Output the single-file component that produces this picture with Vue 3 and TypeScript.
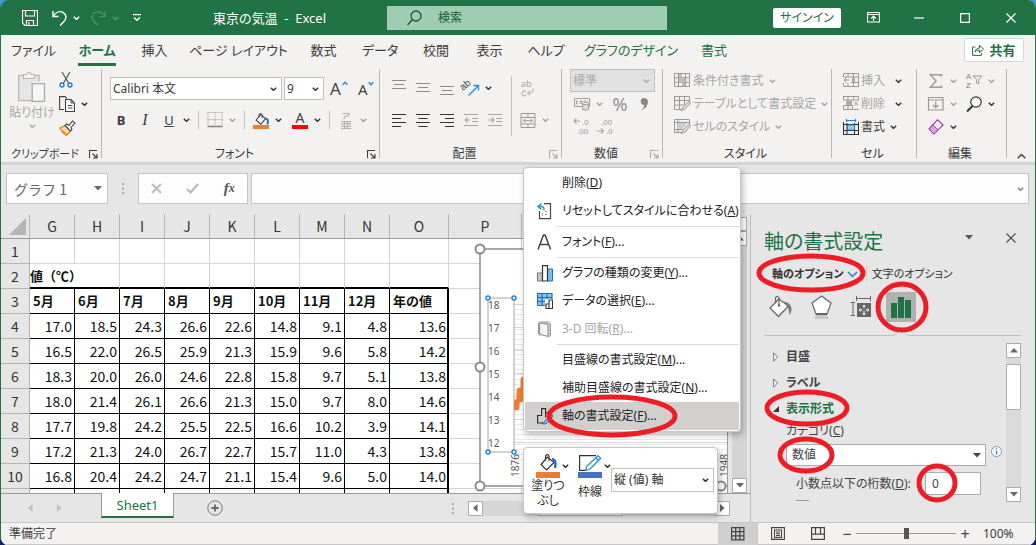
<script setup lang="ts">
import { h, ref } from 'vue'

const art: Record<string, string> = {
  chev: '<path d="M.8 .8 3.5 3.4 6.2 .8" fill="none" stroke="currentColor" stroke-width="1.5"/>',
  chevL: '<path d="M1 1 5.500 5.500 10 1" fill="none" stroke="currentColor" stroke-width="1.5"/>',
  down: '<path d="M0 0h8L4 4.500z" fill="currentColor"/>',
  up: '<path d="M0 4.500h8L4 0z" fill="currentColor"/>',
  left: '<path d="M4.500 0v8L0 4z" fill="currentColor"/>',
  right: '<path d="M0 0v8l4.500-4z" fill="currentColor"/>',
  save: '<path d="M.5 .5h15v15H3L.5 13zM3.500 .5v5.500h9V.5M4.500 15.500v-5h7v5M7 12v3" fill="none" stroke="#fff" stroke-width="1.200"/>',
  undo: '<path d="M1 1v5.500h5.500M1.500 6C4 2 8 1 11 2.500c4 2.200 3.500 6.500 1 9L8 15.500" fill="none" stroke="currentColor" stroke-width="1.400"/>',
  redo: '<path d="M14 1v5.500H8.500M13.500 6C11 2 7 1 4 2.500 0 4.700.5 9 3 11.500L7 15.500" fill="none" stroke="currentColor" stroke-width="1.200"/>',
  custom: '<path d="M0 .7h8" stroke="#fff" stroke-width="1.300"/><path d="M1 3.500 4 6.300 7 3.500" fill="none" stroke="#fff" stroke-width="1.400"/>',
  search: '<circle cx="9" cy="6" r="5" fill="none" stroke="currentColor" stroke-width="1.300"/><path d="M5.500 9.500.5 15" stroke="currentColor" stroke-width="1.400"/>',
  display: '<path d="M.5 .5h12v9.500H.5zM.5 2.500h12M6.500 9V4.500M4.200 6.500 6.500 4.200l2.300 2.300" fill="none" stroke="#fff" stroke-width="1.200"/>',
  min: '<path d="M0 5h10" stroke="#fff" stroke-width="1.200"/>',
  max: '<path d="M.6 .6h8.800v8.800H.6z" fill="none" stroke="#fff" stroke-width="1.200"/>',
  close: '<path d="M.5 .5l9 9m0-9l-9 9" stroke="currentColor" stroke-width="1.300"/>',
  share: '<path d="M3.500 3H.6v8.400h8.800V9M3 8c.5-3 2.500-4 4.500-4V1.200L11.500 5 7.500 8.500V6C5.500 6 4 6.500 3 8z" fill="none" stroke="#217346" stroke-width="1"/>',
  paste: '<path d="M6 3.500H.7v25h13M21 9.500v-6h-5" fill="none" stroke="#b9b9b9" stroke-width="1.500"/><path d="M2 5h18v5h-6v17H2z" fill="#e6e6e6"/><path d="M5.500 6.500v-4h3a2.600 2.600 0 0 1 5 0h3v4z" fill="#f3f2f1" stroke="#b9b9b9" stroke-width="1.200"/><path d="M14.200 11.700h12.300v17.600H14.200z" fill="#f6f6f6" stroke="#a9a9a9" stroke-width="1.300"/>',
  cut: '<path d="M3 0l6.500 11M11 0 4.500 11" stroke="#555" stroke-width="1.200"/><circle cx="3" cy="13" r="2" fill="none" stroke="#1e7fd0" stroke-width="1.400"/><circle cx="11" cy="13" r="2" fill="none" stroke="#1e7fd0" stroke-width="1.400"/>',
  copy: '<path d="M5 13.500H.6V.6H6l2 2" fill="none" stroke="#444" stroke-width="1.100"/><path d="M6.500 3.500h5.500l3.500 3.500v8.500h-9z" fill="#fff" stroke="#444" stroke-width="1.100"/><path d="M12 3.500V7h3.500M9 9.500h4.500M9 12h4.500" fill="none" stroke="#444"/>',
  brush: '<path d="M1 8l5-2.500 5.500 5.500-4 4.500C5 14 2.500 11.500 1 8z" fill="#ffd9ad" stroke="#e8821e" stroke-width="1.300"/><path d="M4 11l4 4" stroke="#e8821e"/><path d="M6 5.500 8 4l2 1.500L13.500 1 16 3l-4 4.500 1 2-1.500 1.500z" fill="#fff" stroke="#444" stroke-width="1.100"/>',
  launch: '<path d="M.5 8V.5H8M3.500 3.500l4 4M8 4v4H4" fill="none" stroke="currentColor" stroke-width="1.100"/>',
  borders: '<path d="M.5 0v14M7.500 0v14M14.500 0v14M0 .5h15M0 7.500h15" stroke="#a0a0a0" stroke-dasharray="1 1" fill="none"/><path d="M0 14.500h15" stroke="#808080" stroke-width="1.500"/>',
  bucket: '<path d="M6.500 1.500 2.200 7.200l4.600 4 4.800-5.700z" fill="#fff" stroke="#444" stroke-width="1.100"/><path d="M5 4.500V1.800C5 0 8 0 8 1.800V5" fill="none" stroke="#444"/><path d="M11.500 5.500c2.500.2 3 2.500 1.800 6" fill="none" stroke="#1e6fb8" stroke-width="2"/>',
  mbucket: '<path d="M7.500 3 1 10.500l5.500 5.500 7.500-7.500z" fill="#fff" stroke="#333" stroke-width="1.200"/><path d="M5.500 6.500V2.500C5.500 0 9 0 9 2.500V7" fill="none" stroke="#333" stroke-width="1.100"/><path d="M12 5c3.500.5 4 4 3 9" fill="none" stroke="#1e6fb8" stroke-width="2.400"/>',
  ruby: '<path d="M1.500 1.500h7q0 2-3 3M4.500 3q0 3-2 4" fill="none" stroke="#b1b1b1" stroke-width="1.100"/><path d="M0 9.500h10M3.500 9.500v7M6.500 9.500v7M1 11.500v3h8v-3zM0 16.500h10" fill="none" stroke="#b1b1b1" stroke-width="1.100"/>',
  a0: '<path d="M0 .5h14M2 4.500h10M0 8.500h14" stroke="#8d8d8d"/>',
  aL: '<path d="M0 1.500h14M0 5.500h9M0 9.500h14M0 13.500h9" stroke="#333" stroke-width="1.200"/>',
  aC: '<path d="M0 1.500h14M2.500 5.500h9M0 9.500h14M2.500 13.500h9" stroke="#333" stroke-width="1.200"/>',
  aR: '<path d="M0 1.500h14M5 5.500h9M0 9.500h14M5 13.500h9" stroke="#333" stroke-width="1.200"/>',
  outd: '<path d="M0 2.500h14M8 6.500h6M8 9.500h6M0 13.500h14M1 8h5.500M3.500 5.500 1 8l2.500 2.500" fill="none" stroke="#a8a8a8" stroke-width="1.100"/>',
  ind: '<path d="M0 2.500h14M8 6.500h6M8 9.500h6M0 13.500h14M0 8h6M3.500 5.500 6 8l-2.500 2.500" fill="none" stroke="#a8a8a8" stroke-width="1.100"/>',
  orient: '<text x="3" y="14" font-size="10" font-family="Liberation Sans" fill="#444" transform="rotate(-40 3 14)">ab</text><path d="M8.500 18.500 18 9M13.500 8.500H18.500V13.500" fill="none" stroke="#1e8fd8" stroke-width="1.300"/>',
  wrap: '<text x="2" y="9" font-size="9" font-family="Noto Sans" fill="#a6a6a6">ab</text><path d="M7 13.500q-4-1.500-4 2t4 2M14 10.500q1.500 5-5 4.500M11 12.500 8.500 15l2.500 2.500" fill="none" stroke="#a6a6a6"/>',
  merge: '<path d="M.5 .5h14v14H.5zM.5 4.500h14M.5 11h14M7.500 .5v4M7.500 11v4M3 7.700h9M5 5.700l-2 2 2 2M10 5.700l2 2-2 2" fill="none" stroke="#999"/>',
  money: '<path d="M.5 2.500h15v8H.5z" fill="none" stroke="#a0a0a0"/><path d="M4 5H2.500v3H4M6 8V5h2v3M10 5h2M13 5v2" fill="none" stroke="#a0a0a0"/><path d="M8.500 7.500v6q3 1.800 6 0v-6z" fill="#ddd" stroke="#a0a0a0"/><ellipse cx="11.500" cy="7.500" rx="3" ry="1.200" fill="#eee" stroke="#a0a0a0"/>',
  comma: '<path d="M4 0a3.500 3.500 0 1 0 .5 7Q4 10 1 12q7-2 7-8.500Q7.500 0 4 0z" fill="#888"/>',
  dec1: '<path d="M8 5H1.800M4.500 2.500 2 5l2.500 2.500" fill="none" stroke="#aaa" stroke-width="1.100"/><text x="10" y="9" font-size="8" font-family="Liberation Sans" fill="#999">.0</text><text x="5" y="18" font-size="8" font-family="Liberation Sans" fill="#999">.00</text>',
  dec2: '<path d="M1 15h6.500M5 12.500 7.500 15 5 17.500" fill="none" stroke="#aaa" stroke-width="1.100"/><text x="5" y="9" font-size="8" font-family="Liberation Sans" fill="#999">.00</text><text x="10" y="18" font-size="8" font-family="Liberation Sans" fill="#999">.0</text>',
  cond: '<path d="M.5 .5h15v13H.5zM.5 4.800h15M.5 9.200h15M4.500 .5v13M11.500 .5v13" fill="none" stroke="#999"/><path d="M5 1h3v3.500H5zM5 5h6v4H5zM8 9.500h3V13H8z" fill="#bbb"/>',
  tfmt: '<path d="M9 13.500H.5V.5h15V5M.5 4.500h15M.5 9h10M5.500 .5v13M10.500 .5v8" fill="none" stroke="#999"/><path d="M15.500 5 9.500 10.500 7 14.500l4-1.500L16.500 7z" fill="#ddd" stroke="#999"/>',
  cfmt: '<path d="M9 13.500H.5V.5h15V5M.5 3.500h15M.5 10.500h8M4 .5v13" fill="none" stroke="#999"/><path d="M4.500 4h9l-5 6h-4z" fill="#ccc"/><path d="M15.500 5 9.500 10.500 7 14.500l4-1.500L16.500 7z" fill="#ddd" stroke="#999"/>',
  cins: '<path d="M.5 4V.5h15v13H.5V10M5 .5V4M10.500 .5v13M5 10v3.500M.5 4h15M8 9.500h7.500M6.500 7H1M3.500 4.500 1 7l2.500 2.500" fill="none" stroke="#999"/><path d="M9 5h3v4H9z" fill="#aaa"/>',
  cdel: '<path d="M0 .5h15.500V4H.5V.5M5 .5V4M10.500 .5V4M.5 9.500h9v4h-9zM5 9.500v4M10 13.500h5.500M11 5.500l4 4m0-4l-4 4" fill="none" stroke="#999"/><path d="M3 4.500h6v4.500H3z" fill="#aaa"/>',
  cfm: '<path d="M.5 3v12.500h15V3M.5 5.500h15M.5 11.500h15M4 4v11.500M11.500 4v11.500" fill="none" stroke="#333" stroke-width="1.100"/><path d="M4.500 6h7v5h-7z" fill="#9ecbf0" stroke="#1e7fd0"/><path d="M3.500 1.500h9M3.500 0v3M12.500 0v3" stroke="#1e7fd0" stroke-width="1.200"/>',
  sigma: '<path d="M12 2.500V.8H.8L6.500 7 .8 13.200H12v-1.700" fill="none" stroke="#9c9c9c" stroke-width="1.400"/>',
  az: '<text x="1" y="8" font-size="8" font-family="Liberation Sans" fill="#888">A</text><text x="1" y="17" font-size="8" font-family="Liberation Sans" fill="#777">Z</text><path d="M8 5h9l-3.300 3.500V13l-2.200-1V8.500z" fill="none" stroke="#999"/>',
  filld: '<path d="M.5 .5h14.500v12.500H.5zM.5 3h14.500M7.700 4.500v6M5 8l2.700 2.700L10.500 8" fill="none" stroke="#999" stroke-width="1.200"/>',
  find: '<circle cx="10" cy="6" r="5.200" fill="#fff" stroke="#333" stroke-width="1.200"/><path d="M6.500 10 1 15.500" stroke="#333" stroke-width="2"/>',
  erase: '<path d="M9.500 .8 15 6 6 15 1 10z" fill="#fff" stroke="#a23bb0" stroke-width="1.200"/><path d="M5 6l5 5-4 4-5-5z" fill="#d9a0e0" stroke="#a23bb0"/>',
  caret: '<path d="M.7 5.300 4.500 1.500 8.300 5.300" fill="none" stroke="#444" stroke-width="1.500"/>',
  growc: '<path d="M.7 3.800 3 1.200 5.300 3.800" fill="none" stroke="#1e8fd8" stroke-width="1.400"/>',
  shrinkc: '<path d="M.7 1.200 3 3.800 5.300 1.200" fill="none" stroke="#1e8fd8" stroke-width="1.400"/>',
  dots: '<path d="M0 0h2v2H0zM0 4.500h2v2H0zM0 9h2v2H0z" fill="#a8a8a8"/>',
  cancel: '<path d="M1 1l9 9M10 1l-9 9" stroke="#bbb" stroke-width="1.800"/>',
  ok: '<path d="M1 6l3.500 3.500L12 1" fill="none" stroke="#bbb" stroke-width="2.200"/>',
  plus: '<circle cx="8" cy="8" r="7.200" fill="none" stroke="#777"/><path d="M4.500 8h7M8 4.500v7" stroke="#666" stroke-width="1.800"/>',
  reset: '<path d="M7 .6h6.500v15H2.500V8" fill="none" stroke="#444" stroke-width="1.200"/><path d="M6 10l-1.500 1.500L6 13M8 8.500h3M8 11.500h3" fill="none" stroke="#888" stroke-dasharray="2 1"/><path d="M4.500 .5 1 3.500l3.500 3M1 3.500h3.500q3 .5 2.500 4" fill="none" stroke="#1e8fd8" stroke-width="1.300"/>',
  bigA: '<path d="M1 15.500 6.500 1h1.600l5.500 14.500M3 10.500h8.500" fill="none" stroke="#444" stroke-width="1.500"/>',
  ctype: '<path d="M.5 8h5v8h-5z" fill="#c4c4c4" stroke="#777"/><path d="M10.500 4h5v12h-5z" fill="#7cbcf0" stroke="#1e6fb8"/><path d="M5.500 .6h5V16h-5z" fill="#fff" stroke="#333" stroke-width="1.200"/>',
  cdata: '<path d="M.5 .5h14.500v12H.5z" fill="#8cc4f4"/><path d="M.5 12.500V.5h14.500V6M.5 4.500h14.500M.5 8.500h9M5 .5v12M10 .5v6M.5 12.500H8" fill="none" stroke="#1e6fb8" stroke-width="1.200"/><path d="M8 6h8v9.500H8z" fill="#fff"/><path d="M9 11h3v4.500H9zM12 7h3.500v8.500H12z" fill="#fff" stroke="#333" stroke-width="1.100"/>',
  rot: '<path d="M3.500 1h8l2 1.500v12l-2 1.500M3.500 1 1.500 2v11l2 1.500" fill="#ccc" stroke="#999"/><path d="M2.500 2l8.500 1.500v12L2.500 13z" fill="#f4f4f4" stroke="#999" stroke-width="1.200"/>',
  afmt: '<path d="M7 15H.6V7.500h4V.6h4v9M8.600 4.500h4V7" fill="none" stroke="#333" stroke-width="1.200"/><path d="M15.500 6.500 9 11.500q-1.500 3-4.500 4 5 1.500 7-2L16 8z" fill="#7cbcf0" stroke="#1e6fb8"/>',
  pen: '<path d="M17 .6H.6v14.800H7" fill="none" stroke="#333" stroke-width="1.200"/><path d="M19 .8l2.700 2.500L11 14l-4.500 1.500L8 11zM17 3l2.500 2.500" fill="#fff" stroke="#1e8fd8" stroke-width="1.300"/>',
  pbucket: '<path d="M10 4 1 13l8.500 8.500L19.500 11z" fill="#fff" stroke="#666" stroke-width="1.300"/><path d="M6.500 8V3Q8 -.5 10 3v7" fill="none" stroke="#666" stroke-width="1.200"/><circle cx="10" cy="10.500" r="1.300" fill="#666"/><path d="M14 6.500q6 .5 8 5 1.500 4-1.500 8.500-.5-7-3-9.500z" fill="#777"/>',
  penta: '<path d="M5 19h11l2 5H3z" fill="#c9c9c9"/><path d="M10.500 1 20 8l-4 11H5L1 8z" fill="#fff" stroke="#666" stroke-width="1.200"/><path d="M5 19h11" stroke="#666" stroke-width="2"/>',
  sizep: '<path d="M6 2.500h15M6.500 0v5M20.500 0v5M3 6v14M.5 6.500H5M.5 19.500H5" stroke="#666"/><path d="M7 7h14v14H7z" fill="#666"/><path d="M14 9v3.500M14 15v4M9 14h3.500M15.500 14H19M12.500 10.500 14 9l1.500 1.500M12.500 17.500 14 19l1.500-1.500M10.500 12.500 9 14l1.500 1.500M17.500 12.500 19 14l-1.500 1.500" fill="none" stroke="#fff"/>',
  bars: '<path d="M0 6h6v15H0zM7 0h6v21H7zM14 3h6v18h-6z" fill="#217346"/>',
  closed: '<path d="M.7 .8v8.400L4.500 5z" fill="#fff" stroke="#777" stroke-width="1"/>',
  open: '<path d="M6 0v6H0z" fill="#333"/>',
  info: '<circle cx="5.500" cy="5.500" r="5" fill="#fff" stroke="#6f9bd8"/><path d="M5.500 5v3.500M5.500 2.500v1.300" stroke="#3b6fc0" stroke-width="1.300"/>',
  vgrid: '<path d="M.6 .6h12.300v12.300H.6zM.6 4.700h12.300M.6 8.800h12.300M4.700 .6v12.300M8.800 .6v12.300" fill="none" stroke="#444" stroke-width="1.200"/>',
  vpage: '<path d="M.6 .6h12.800v11.800H.6zM3.500 3h7v7.500h-7zM5 5h4M5 6.800h4M5 8.600h4" fill="none" stroke="#444" stroke-width="1.100"/>',
  vbreak: '<path d="M.6 .6h12.800v11.800H.6zM4.500 .6v6.500M9.500 .6v6.500M.6 7.100h12.800" fill="none" stroke="#444" stroke-width="1.200"/>',
}

const Ico = (p: { n: string; w: number; t: number }) =>
  h('svg', { width: p.w, height: p.t, viewBox: `0 0 ${p.w} ${p.t}`, 'aria-hidden': 'true', innerHTML: art[p.n] })
Ico.props = ['n', 'w', 't']

const tabs = ['ファイル', 'ホーム', '挿入', 'ページ レイアウト', '数式', 'データ', '校閲', '表示', 'ヘルプ', 'グラフのデザイン', '書式']
const cols = ['G', 'H', 'I', 'J', 'K', 'L', 'M', 'N', 'O', 'P', 'Q', 'R']
const months = ['5月', '6月', '7月', '8月', '9月', '10月', '11月', '12月', '年の値']
const temps = [
  ['17.0', '18.5', '24.3', '26.6', '22.6', '14.8', '9.1', '4.8', '13.6'],
  ['16.5', '22.0', '26.5', '25.9', '21.3', '15.9', '9.6', '5.8', '14.2'],
  ['18.3', '20.0', '26.0', '24.6', '22.8', '15.8', '9.7', '5.1', '13.8'],
  ['18.0', '21.4', '26.1', '26.6', '21.3', '15.0', '9.7', '8.0', '14.6'],
  ['17.7', '19.8', '24.2', '25.5', '22.5', '16.6', '10.2', '3.9', '14.1'],
  ['17.2', '21.3', '24.0', '26.7', '22.7', '15.7', '11.0', '4.3', '13.8'],
  ['16.8', '20.4', '24.2', '24.7', '21.1', '15.4', '9.6', '5.0', '14.0'],
  ['', '', '', '', '', '', '', '', ''],
]
const styleRows = [
  { n: 'cond', t: '条件付き書式' },
  { n: 'tfmt', t: 'テーブルとして書式設定' },
  { n: 'cfmt', t: 'セルのスタイル' },
]
const cellRows = [
  { n: 'cins', t: '挿入', off: true },
  { n: 'cdel', t: '削除', off: true },
  { n: 'cfm', t: '書式', off: false },
]
interface MenuRow { t?: string; k?: string; e?: string; n?: string; off?: boolean; hot?: boolean }
const menu: MenuRow[] = [
  { t: '削除', k: 'D', e: '' },
  { t: 'リセットしてスタイルに合わせる', k: 'A', e: '', n: 'reset' },
  {},
  { t: 'フォント', k: 'F', e: '...', n: 'bigA' },
  {},
  { t: 'グラフの種類の変更', k: 'Y', e: '...', n: 'ctype' },
  { t: 'データの選択', k: 'E', e: '...', n: 'cdata' },
  { t: '3-D 回転', k: 'R', e: '...', n: 'rot', off: true },
  {},
  { t: '目盛線の書式設定', k: 'M', e: '...' },
  { t: '補助目盛線の書式設定', k: 'N', e: '...' },
  { t: '軸の書式設定', k: 'F', e: '...', n: 'afmt', hot: true },
]
const axis = [18, 17, 16, 15, 14, 13, 12]
const minor = Array.from({ length: 32 }, (_, i) => 61 + i * 5)
const digits = ref('0')
const zoom = ref(50)
</script>

<template>
  <div class="win">
    <header class="title">
      <div class="quick">
        <button aria-label="保存"><Ico n="save" :w="16" :t="16" /></button>
        <button class="hist" aria-label="元に戻す"><Ico n="undo" :w="15" :t="16" /><Ico n="chev" :w="7" :t="4" /></button>
        <button class="hist dim" aria-label="やり直し"><Ico n="redo" :w="15" :t="16" /><Ico n="chev" :w="7" :t="4" /></button>
        <button aria-label="カスタマイズ"><Ico n="custom" :w="8" :t="7" /></button>
      </div>
      <span class="doc">東京の気温&nbsp; -&nbsp; Excel</span>
      <label class="search"><Ico n="search" :w="15" :t="16" /><input type="text" placeholder="検索" aria-label="検索" /></label>
      <div class="sys">
        <button class="signin">サインイン</button>
        <button aria-label="リボンの表示"><Ico n="display" :w="13" :t="11" /></button>
        <button aria-label="最小化"><Ico n="min" :w="10" :t="10" /></button>
        <button aria-label="最大化"><Ico n="max" :w="10" :t="10" /></button>
        <button aria-label="閉じる"><Ico n="close" :w="10" :t="10" /></button>
      </div>
    </header>

    <nav class="tabs">
      <div class="tablist">
        <button v-for="(t, i) in tabs" :key="t" :class="{ on: i === 1, ctx: i > 8 }"><span>{{ t }}</span></button>
      </div>
      <button class="share"><Ico n="share" :w="12" :t="12" />共有</button>
    </nav>

    <section class="ribbon">
      <div class="grp g-clip">
        <div class="body">
          <button class="paste"><Ico n="paste" :w="28" :t="30" /><span>貼り付け</span><Ico n="chev" :w="7" :t="4" /></button>
          <div class="clipcol">
            <button aria-label="切り取り"><Ico n="cut" :w="14" :t="16" /></button>
            <button aria-label="コピー"><Ico n="copy" :w="16" :t="16" /><Ico n="chev" :w="7" :t="4" /></button>
            <button aria-label="書式のコピー"><Ico n="brush" :w="17" :t="16" /></button>
          </div>
        </div>
        <div class="lab"><span>クリップボード</span><Ico n="launch" :w="9" :t="9" /></div>
      </div>

      <div class="grp g-font">
        <div class="body low">
          <div class="row fontrow">
            <span class="sel fname"><select aria-label="フォント名"><option>Calibri 本文</option></select><Ico n="chev" :w="7" :t="4" /></span>
            <span class="sel fsize"><select aria-label="フォント サイズ"><option>9</option></select><Ico n="chev" :w="7" :t="4" /></span>
            <button class="grow" aria-label="拡大">A<Ico n="growc" :w="6" :t="5" /></button>
            <button class="shrink" aria-label="縮小">A<Ico n="shrinkc" :w="6" :t="5" /></button>
          </div>
          <div class="row">
            <button class="b"><b>B</b></button>
            <button class="b"><i>I</i></button>
            <button class="split"><u>U</u><Ico n="chev" :w="7" :t="4" /></button>
            <i class="bar"></i>
            <button class="split off" aria-label="罫線"><Ico n="borders" :w="15" :t="16" /><Ico n="chev" :w="7" :t="4" /></button>
            <i class="bar"></i>
            <button class="split" aria-label="塗りつぶしの色"><span class="ink orange"><Ico n="bucket" :w="15" :t="12" /></span><Ico n="chev" :w="7" :t="4" /></button>
            <button class="split fc" aria-label="フォントの色"><span class="ink red">A</span><Ico n="chev" :w="7" :t="4" /></button>
            <i class="bar"></i>
            <button class="split off" aria-label="ふりがな"><Ico n="ruby" :w="10" :t="17" /><Ico n="chev" :w="7" :t="4" /></button>
          </div>
        </div>
        <div class="lab"><span>フォント</span><Ico n="launch" :w="9" :t="9" /></div>
      </div>

      <div class="grp g-align">
        <div class="body low horiz">
          <div>
            <div class="row">
              <button class="b st" aria-label="上揃え"><Ico n="a0" :w="14" :t="10" /></button>
              <button class="b" aria-label="上下中央"><Ico n="a0" :w="14" :t="10" /></button>
              <button class="b sb" aria-label="下揃え"><Ico n="a0" :w="14" :t="10" /></button>
              <button class="split" aria-label="方向"><Ico n="orient" :w="22" :t="22" /><Ico n="chev" :w="7" :t="4" /></button>
            </div>
            <div class="row">
              <button class="b" aria-label="左揃え"><Ico n="aL" :w="14" :t="15" /></button>
              <button class="b" aria-label="中央揃え"><Ico n="aC" :w="14" :t="15" /></button>
              <button class="b" aria-label="右揃え"><Ico n="aR" :w="14" :t="15" /></button>
              <button class="b" aria-label="インデントを減らす"><Ico n="outd" :w="14" :t="16" /></button>
              <button class="b" aria-label="インデントを増やす"><Ico n="ind" :w="14" :t="16" /></button>
            </div>
          </div>
          <i class="bar tall"></i>
          <div>
            <div class="row"><button class="b" aria-label="折り返し"><Ico n="wrap" :w="18" :t="20" /></button></div>
            <div class="row"><button class="split off" aria-label="結合"><Ico n="merge" :w="15" :t="15" /><Ico n="chev" :w="7" :t="4" /></button></div>
          </div>
        </div>
        <div class="lab dis"><span>配置</span><Ico n="launch" :w="9" :t="9" /></div>
      </div>

      <div class="grp g-num">
        <div class="body">
          <span class="sel nfmt"><select disabled aria-label="表示形式"><option>標準</option></select><Ico n="chev" :w="7" :t="4" /></span>
          <div class="row nrow">
            <button class="split off" aria-label="通貨"><Ico n="money" :w="16" :t="15" /><Ico n="chev" :w="7" :t="4" /></button>
            <button class="pct">%</button>
            <button class="b" aria-label="桁区切り"><Ico n="comma" :w="8" :t="12" /></button>
          </div>
          <div class="row nrow">
            <button class="b" aria-label="小数点以下を増やす"><Ico n="dec1" :w="20" :t="21" /></button>
            <button class="b" aria-label="小数点以下を減らす"><Ico n="dec2" :w="20" :t="21" /></button>
          </div>
        </div>
        <div class="lab dis"><span>数値</span><Ico n="launch" :w="9" :t="9" /></div>
      </div>

      <div class="grp g-style">
        <div class="body">
          <button v-for="s in styleRows" :key="s.t" class="cmd off"><Ico :n="s.n" :w="17" :t="15" /><span>{{ s.t }}</span><Ico n="chev" :w="7" :t="4" /></button>
        </div>
        <div class="lab"><span>スタイル</span></div>
      </div>

      <div class="grp g-cell">
        <div class="body">
          <button v-for="s in cellRows" :key="s.t" class="cmd" :class="{ grey: s.off }"><Ico :n="s.n" :w="16" :t="16" /><span>{{ s.t }}</span><Ico n="chev" :w="7" :t="4" class="ch" /></button>
        </div>
        <div class="lab"><span>セル</span></div>
      </div>

      <div class="grp g-edit">
        <div class="body">
          <div class="row nrow"><button class="split off" aria-label="合計"><Ico n="sigma" :w="13" :t="14" /><Ico n="chev" :w="7" :t="4" /></button><button class="split off" aria-label="並べ替え"><Ico n="az" :w="18" :t="19" /><Ico n="chev" :w="7" :t="4" /></button></div>
          <div class="row nrow"><button class="split off" aria-label="フィル"><Ico n="filld" :w="16" :t="14" /><Ico n="chev" :w="7" :t="4" /></button><button class="split" aria-label="検索と選択"><Ico n="find" :w="16" :t="16" /><Ico n="chev" :w="7" :t="4" /></button></div>
          <div class="row nrow"><button class="split" aria-label="クリア"><Ico n="erase" :w="16" :t="16" /><Ico n="chev" :w="7" :t="4" /></button></div>
        </div>
        <div class="lab"><span>編集</span></div>
      </div>
      <button class="fold" aria-label="リボンを折りたたむ"><Ico n="caret" :w="9" :t="6" /></button>
    </section>

    <section class="formula">
      <span class="namebox"><input type="text" value="グラフ 1" aria-label="名前ボックス" /><Ico n="down" :w="8" :t="5" /></span>
      <Ico n="dots" :w="2" :t="11" />
      <div class="fxbox">
        <button aria-label="キャンセル"><Ico n="cancel" :w="11" :t="11" /></button>
        <button aria-label="入力"><Ico n="ok" :w="13" :t="11" /></button>
        <button class="fx" aria-label="関数の挿入">f<small>x</small></button>
      </div>
      <span class="fbar"><input type="text" aria-label="数式バー" /><Ico n="chev" :w="7" :t="4" /></span>
    </section>

    <main class="work">
      <div class="book">
        <div class="view">
          <div class="sheet">
            <table>
              <colgroup><col class="c0" /><col v-for="i in 8" :key="i" class="c1" /><col class="c2" /><col v-for="i in 3" :key="'p' + i" class="c3" /></colgroup>
              <thead>
                <tr><th class="corner"><i></i></th><th v-for="c in cols" :key="c">{{ c }}</th></tr>
              </thead>
              <tbody>
                <tr><th>1</th><td v-for="c in cols" :key="c"></td></tr>
                <tr class="cap"><th>2</th><td colspan="2">値（℃）</td><td v-for="i in 10" :key="i"></td></tr>
                <tr class="rec head"><th>3</th><td v-for="m in months" :key="m">{{ m }}</td><td></td><td></td><td></td></tr>
                <tr v-for="(r, i) in temps" :key="i" class="rec"><th>{{ i < 7 ? i + 4 : '' }}</th><td v-for="(v, j) in r" :key="j">{{ v }}</td><td></td><td></td><td></td></tr>
              </tbody>
            </table>
            <svg class="chart" width="256" height="252" viewBox="0 0 256 252" role="img" aria-label="気温グラフ">
              <path d="M6 6h250v238H6z" fill="#fff" />
              <path v-for="y in minor" :key="y" :d="`M40 ${y}.5h216`" stroke="#e9e9e9" />
              <path v-for="(a, i) in axis" :key="a" :d="`M40 ${61 + i * 23}.5h216`" stroke="#d4d4d4" />
              <path d="M6 248V6h250M6 243h250" fill="none" stroke="#8c8c8c" stroke-width="1.500" />
              <path d="M42 160v4M46 148v8M50 137v8" fill="none" stroke="#ed7d31" stroke-width="7" stroke-linecap="round" />
              <path d="M42 162l4-10 4 2v-14" fill="none" stroke="#ed7d31" stroke-width="3" />
              <path d="M14 55h26v154H14z" fill="#fff" stroke="#a6a6a6" />
              <text v-for="(a, i) in axis" :key="a" x="14" :y="66 + i * 23" class="ax">{{ a }}</text>
              <text class="ax" transform="translate(45 234) rotate(-90)">1876</text>
              <text class="ax" transform="translate(254 234) rotate(-90)">1948</text>
              <g fill="#fff" stroke="#8c8c8c" stroke-width="2"><circle cx="6" cy="6" r="4.500" /><circle cx="6" cy="124" r="4.500" /><circle cx="6" cy="243" r="4.500" /><circle cx="247" cy="243" r="4.500" /></g>
              <g fill="#fff" stroke="#1e88d8" stroke-width="1.500"><circle cx="14" cy="55" r="2" /><circle cx="40" cy="55" r="2" /><circle cx="14" cy="209" r="2" /><circle cx="40" cy="209" r="2" /></g>
            </svg>
          </div>
          <div class="vscroll"><button class="sbtn split2" aria-label="分割"></button><button class="sbtn" aria-label="上へ"><Ico n="up" :w="8" :t="5" /></button><i></i><button class="sbtn" aria-label="下へ"><Ico n="down" :w="8" :t="5" /></button></div>
        </div>
        <div class="sheets">
          <div class="navs"><Ico n="left" :w="5" :t="8" /><Ico n="right" :w="5" :t="8" /></div>
          <button class="stab">Sheet1</button>
          <button class="add" aria-label="新しいシート"><Ico n="plus" :w="16" :t="16" /></button>
          <Ico n="dots" :w="2" :t="11" class="grip" />
          <div class="hscroll"><button class="sbtn" aria-label="左へ"><Ico n="left" :w="5" :t="8" /></button><i><b></b></i><button class="sbtn" aria-label="右へ"><Ico n="right" :w="5" :t="8" /></button></div>
        </div>
      </div>

      <aside class="pane">
        <div class="phead"><h2>軸の書式設定</h2><Ico n="down" :w="9" :t="5" /><button aria-label="閉じる"><Ico n="close" :w="10" :t="10" /></button></div>
        <div class="popt"><button><b>軸のオプション</b><Ico n="chevL" :w="11" :t="7" class="blue" /></button><i></i><button>文字のオプション</button></div>
        <div class="picons">
          <button aria-label="塗りつぶしと線"><Ico n="pbucket" :w="24" :t="24" /></button>
          <button aria-label="効果"><Ico n="penta" :w="21" :t="25" /></button>
          <button aria-label="サイズとプロパティ"><Ico n="sizep" :w="22" :t="22" /></button>
          <button class="on" aria-label="軸のオプション"><Ico n="bars" :w="20" :t="21" /></button>
        </div>
        <div class="pline"><svg width="258" height="7" viewBox="0 0 258 7"><path d="M0 6.500h130l7-6 7 6h114" fill="none" stroke="#c0c0c0" /></svg></div>
        <div class="pbody">
          <div class="pform">
            <button class="sec"><Ico n="closed" :w="6" :t="10" />目盛</button>
            <button class="sec"><Ico n="closed" :w="6" :t="10" />ラベル</button>
            <button class="sec on"><Ico n="open" :w="6" :t="6" />表示形式</button>
            <label class="cat" for="cat">カテゴリ(<u>C</u>)</label>
            <div class="catrow"><span class="sel"><select id="cat"><option>数値</option></select><Ico n="down" :w="8" :t="5" /></span><Ico n="info" :w="11" :t="11" /></div>
            <div class="digits"><label for="dig">小数点以下の桁数(<u>D</u>):</label><input id="dig" v-model="digits" type="text" /></div>
            <i class="cutbox"></i>
          </div>
          <div class="pscroll"><button class="sbtn" aria-label="上へ"><Ico n="up" :w="8" :t="5" /></button><i><b></b></i><button class="sbtn" aria-label="下へ"><Ico n="down" :w="8" :t="5" /></button></div>
        </div>
      </aside>
    </main>

    <footer class="status">
      <span>準備完了</span>
      <div class="views">
        <button class="on" aria-label="標準"><Ico n="vgrid" :w="14" :t="14" /></button>
        <button aria-label="ページ レイアウト"><Ico n="vpage" :w="14" :t="13" /></button>
        <button aria-label="改ページ プレビュー"><Ico n="vbreak" :w="14" :t="13" /></button>
      </div>
      <button class="pm">−</button>
      <input v-model="zoom" type="range" min="0" max="100" aria-label="ズーム" />
      <button class="pm">+</button>
      <span class="pc">100%</span>
    </footer>

    <div class="menu" role="menu">
      <template v-for="(m, i) in menu" :key="i">
        <button v-if="m.t" role="menuitem" :class="{ off: m.off, hot: m.hot }"><span class="mi"><Ico v-if="m.n" :n="m.n" :w="16" :t="17" /></span><span>{{ m.t }}(<u>{{ m.k }}</u>){{ m.e }}</span></button>
        <hr v-else />
      </template>
    </div>

    <div class="mini">
      <button><span class="mt"><span class="big orange"><Ico n="mbucket" :w="17" :t="17" /></span><Ico n="chev" :w="7" :t="4" /></span><span class="two">塗りつ<br />ぶし</span></button>
      <button><span class="mt"><span class="big blueb"><Ico n="pen" :w="22" :t="16" /></span><Ico n="chev" :w="7" :t="4" /></span><span class="one">枠線</span></button>
      <span class="sel"><select aria-label="グラフ要素"><option>縦 (値) 軸</option></select><Ico n="chev" :w="7" :t="4" /></span>
    </div>

    <svg class="marks" aria-hidden="true">
      <g fill="none" stroke="#ee1c25" stroke-width="5">
        <ellipse cx="811" cy="273" rx="52" ry="17" /><ellipse cx="902" cy="307" rx="24" ry="23" />
        <ellipse cx="807" cy="408" rx="40" ry="16" /><ellipse cx="806" cy="455" rx="26" ry="16" />
        <ellipse cx="937" cy="483" rx="18" ry="17" /><ellipse cx="612" cy="416" rx="63" ry="19" />
      </g>
    </svg>
  </div>
</template>

<style>
body { margin: 0; background: linear-gradient(#3b9ae8 50%, #0d1f6b 50%); }
</style>

<style scoped>
* { box-sizing: border-box; }
.win { position: relative; display: flex; flex-direction: column; height: 100vh; min-height: 520px; overflow: hidden; border: solid #217346; border-width: 0 1px; border-radius: 8px; background: #f3f2f1; color: #3b3b3b; font: 12px/16px "Noto Sans", "Noto Sans CJK JP", sans-serif; font-feature-settings: "palt"; }
button, input, select { margin: 0; padding: 0; border: 0; border-radius: 0; background: none; color: inherit; font: inherit; font-feature-settings: inherit; white-space: nowrap; }
button { display: flex; align-items: center; justify-content: center; }
svg { flex: none; display: block; }
input:focus, select:focus { outline: 0; }
i { font-style: normal; }
.sel { display: grid; align-items: center; background: #fff; border: 1px solid #c0c0c0; }
.sel > * { grid-area: 1 / 1; }
.sel > svg { justify-self: end; margin-right: 4px; pointer-events: none; }
.sel select { appearance: none; width: 100%; height: 100%; padding: 0 16px 0 2px; opacity: 1; }

.title { display: grid; grid-template-columns: 212px 174px 280px 1fr; align-items: center; height: 35px; background: #217346; color: #fff; }
.quick { display: flex; align-items: center; padding-left: 21px; gap: 14px; }
.hist { gap: 6px; width: 28px; }
.dim { margin-left: -3px; color: #4f9470; }
.doc { font-size: 13px; white-space: nowrap; }
.search { display: flex; align-items: center; gap: 16px; height: 24px; padding-left: 20px; background: #9fcdb3; color: #175c36; }
.search input { width: 180px; }
.search input::placeholder { color: #175c36; opacity: 1; }
.sys { display: flex; justify-content: flex-end; align-items: center; padding-right: 1px; }
.sys button { width: 46px; height: 34px; }
.sys .signin { width: 68px; height: 20px; margin-right: 9px; background: #fff; color: #217346; border-radius: 2px; }

.tabs { display: flex; justify-content: space-between; height: 31px; font-size: 13px; }
.tablist { display: grid; grid-template-columns: 65px 62px 53px 115px 55px 58px 54px 53px 60px 110px 56px; }
.tabs span { padding: 4px 0 3px; line-height: 20px; border-bottom: 3px solid transparent; }
.tabs .on span { font-weight: 700; color: #217346; border-color: #217346; }
.tabs .ctx { color: #217346; }
.tabs .share { width: 60px; height: 24px; margin: 3px 11px 0 0; gap: 5px; background: #fff; border: 1px solid #d8d8d8; border-radius: 2px; color: #217346; font-weight: 700; }

.ribbon { display: flex; height: 99px; border-bottom: 3px solid #d4d4d4; }
.grp { display: flex; flex-direction: column; flex: none; background: linear-gradient(#b8b8b8, #b8b8b8) right 0 top 3px / 1px 89px no-repeat; }
.g-clip { width: 101px; } .g-font { width: 278px; } .g-align { width: 182px; } .g-num { width: 101px; } .g-style { width: 169px; } .g-cell { width: 85px; } .g-edit { width: 90px; }
.body { height: 80px; padding-top: 3px; }
.low { padding: 11px 0 0 7px; }
.horiz { display: flex; padding-top: 10px; }
.low .row + .row { margin-top: 8px; }
.row { display: flex; align-items: center; height: 24px; }
.lab { display: flex; align-items: center; height: 16px; padding-right: 4px; white-space: nowrap; }
.lab span { flex: 1; text-align: center; }
.lab.dis svg { color: #aaa; }
.g-clip .lab span { font-size: 11px; }
.g-clip .body { display: flex; padding: 6px 0 0 6px; }
.paste { flex-direction: column; justify-content: flex-start; width: 50px; color: #a9a9a9; font-size: 12px; }
.paste span { line-height: 22px; }
.clipcol { display: grid; align-content: start; justify-items: start; gap: 8px; padding-left: 2px; }
.clipcol button { gap: 6px; }
.fontrow { height: 23px; }
.fname { width: 172px; height: 23px; margin: 0 2px 0 1px; }
.fsize { width: 40px; height: 23px; }
.fontrow button { height: 23px; gap: 1px; color: #444; }
.fontrow button svg { align-self: flex-start; margin-top: 4px; }
.grow { margin: 0 10px 0 6px; font-size: 17px; } .shrink { font-size: 15px; }
.b { width: 24px; height: 24px; font-size: 13px; }
.b i { font-style: italic; font-family: "Liberation Serif", serif; font-size: 16px; }
.split { width: 36px; height: 24px; justify-content: flex-start; font-size: 13px; }
.split > :first-child { width: 24px; text-align: center; }
.split > svg:last-child { margin-left: 2px; }
.off { color: #a6a6a6; }
.fc { margin-left: 3px; }
.bar { width: 1px; height: 20px; margin: 0 4px 0 5px; background: #c4c4c4; }
.tall { height: 60px; margin: 0 4px; }
.split > .ink { display: flex; justify-content: center; align-items: flex-end; width: 16px; height: 18px; margin: 0 4px; border-bottom: 4px solid; color: #444; font-size: 14px; line-height: 15px; }
.split > .orange, .mt > .orange { border-color: #ed7d31; } .split > .red { border-color: #f00; }
.st { padding-bottom: 6px; } .sb { padding-top: 6px; }
.g-num .body { padding-left: 8px; }
.nfmt { width: 85px; height: 23px; background: #e1e1e1; color: #ababab; }
.nfmt select { opacity: 1; color: #ababab; }
.nrow { height: 23px; }
.g-num .split { margin-right: 2px; }
.pct { width: 24px; color: #8f8f8f; font-size: 18px; }
.cmd { height: 23px; gap: 2px; font-size: 12px; }
.cmd > svg:last-child { margin-left: 3px; }
.g-style .body { padding-left: 11px; }
.g-cell .body { padding-left: 11px; }
.grey span { color: #a6a6a6; }
.cmd.grey > .ch { margin-left: 8px; }
.g-edit .body { padding-left: 7px; }
.g-edit .split + .split { margin-left: 2px; }
.fold { margin: 85px 0 0 10px; height: 10px; }

.formula { display: flex; align-items: center; height: 49px; padding: 0 6px 2px 5px; background: #e6e6e6; font-family: "Noto Sans CJK JP", sans-serif; }
.namebox, .fxbox, .fbar { display: flex; align-items: center; height: 31px; background: #fdfdfd; border: 1px solid #c4c4c4; }
.namebox { width: 102px; padding: 0 5px 0 7px; margin-right: 14px; color: #666; }
.namebox input { flex: 1; min-width: 0; font-size: 14px; font-feature-settings: normal; }
.fxbox { width: 110px; margin: 0 3px 0 14px; justify-content: space-around; }
.fx { font: italic 700 15px "Liberation Serif", serif; color: #555; } .fx small { font-size: 12px; }
.fbar { flex: 1; padding-right: 4px; color: #888; } .fbar input { flex: 1; }

.work { display: flex; flex: 1; min-height: 0; background: #e6e6e6; }
.book { display: flex; flex-direction: column; flex: 1; min-width: 0; }
.view { display: flex; flex: 1; min-height: 0; border-bottom: 1px solid #9b9b9b; }
.sheet { position: relative; flex: 1; min-width: 0; overflow: hidden; background: #fff; border-right: 1px solid #9b9b9b; }
table { table-layout: fixed; width: 666px; border-spacing: 0; font: 14px/20px "Noto Sans CJK JP", sans-serif; color: #111; font-feature-settings: normal; }
.c0 { width: 29px; } .c1 { width: 45px; } .c2 { width: 59px; } .c3 { width: 73px; }
th, td { height: 25px; padding: 0; border: solid #d4d4d4; border-width: 0 1px 1px 0; overflow: hidden; white-space: nowrap; }
th { background: #e6e6e6; color: #333; font-weight: 400; border-color: #b4b4b4; text-align: center; }
thead th { border-bottom-color: #999; }
.corner { padding: 0 3px 3px 0; }
.corner i { display: block; width: 17px; height: 17px; margin: 4px 0 0 auto; background: #b4b4b4; clip-path: polygon(100% 0, 100% 100%, 0 100%); }
.cap td:nth-child(2) { font-size: 13px; font-weight: 700; }
.cap td:nth-child(-n+9) { border-bottom: 2px solid #000; }
.rec td { text-align: right; padding-right: 2px; }
.rec td:nth-child(-n+10) { border-color: #000; }
.rec td:nth-child(10) { border-right-width: 2px; padding-right: 1px; }
.head td { text-align: left; padding: 0 0 0 3px; font-size: 13px; font-weight: 700; }
.chart { position: absolute; left: 473px; top: 29px; }
.ax { font: 10px "Noto Sans", sans-serif; fill: #595959; }
.vscroll { display: flex; flex-direction: column; width: 15px; margin: 3px 3px 0 4px; }
.vscroll > i { flex: 1; background: #d4d4d4; }
.sbtn { flex: none; width: 15px; height: 15px; background: #fff; border: 1px solid #ababab; color: #666; }
.split2 { height: 14px; }

.sheets { display: flex; align-items: center; height: 28px; padding-right: 20px; }
.navs { display: flex; gap: 24px; width: 100px; padding-left: 27px; color: #c0c0c0; }
.stab { align-self: flex-start; width: 73px; height: 25px; margin-top: -1px; background: #fff; border: 1px solid #9b9b9b; border-width: 0 1px 2px; border-bottom-color: #217346; color: #217346; font-size: 13px; }
.add { margin: 0 auto 0 33px; }
.grip { margin-right: 14px; }
.hscroll { display: flex; width: 262px; }
.hscroll i { flex: 1; padding-left: 56px; background: #d6d6d6; } .hscroll b { display: block; width: 83px; height: 15px; background: #fff; border: 1px solid #ababab; }

.pane { display: flex; flex-direction: column; flex: 0 0 285px; min-width: 0; padding: 14px 14px 20px 13px; border-left: 1px solid #bdbdbd; color: #444; }
.phead { display: flex; align-items: center; height: 27px; color: #555; }
.phead h2 { flex: 1; margin: 0; font-size: 20px; line-height: 27px; font-weight: 400; color: #217346; }
.phead button { margin: 0 5px 8px 32px; } .phead > svg { margin-bottom: 8px; }
.popt { display: flex; align-items: center; height: 20px; margin: 9px 0 0 8px; font-size: 11px; }
.popt button { gap: 3px; color: #333; } .popt > i { width: 1px; height: 16px; margin: 0 5px 0 8px; background: #d0d0d0; }
.blue { color: #1e88d8; }
.picons { display: flex; gap: 10px; margin-top: 8px; padding-left: 2px; }
.picons button { width: 30px; height: 30px; } .picons .on { background: #b1b1b1; }
.pline { height: 7px; overflow: hidden; margin-top: 7px; }
.pbody { display: flex; flex: 1; min-height: 0; padding-top: 7px; }
.pform { flex: 1; min-width: 0; overflow: hidden; padding-top: 1px; }
.sec { gap: 7px; height: 26px; margin-left: 9px; font-weight: 700; } .sec.on { color: #217346; }
.cat { display: block; margin: 0 0 4px 22px; line-height: 18px; height: 18px; }
.catrow { display: flex; gap: 5px; margin-left: 22px; }
.catrow .sel { width: 200px; height: 22px; border-color: #ababab; } .catrow select { padding-left: 5px; }
.catrow > svg { margin-top: 2px; }
.digits { display: flex; align-items: center; margin: 6px 0 0 32px; }
.digits label { flex: 0 0 129px; white-space: nowrap; }
.digits input { width: 56px; height: 23px; padding-left: 6px; background: #fff; border: 1px solid #ababab; }
.cutbox { display: block; width: 13px; height: 1px; margin: 5px 0 0 32px; background: #999; }
.pscroll { display: flex; flex-direction: column; width: 15px; }
.pscroll > i { flex: 1; padding-top: 6px; background: #dadada; } .pscroll b { display: block; height: 46px; background: #fff; border: 1px solid #ababab; }

.status { display: flex; align-items: center; height: 23px; padding: 0 19px 0 8px; border-top: 1px solid #c6c6c6; border-bottom: 1px solid #c6c6c6; background: #f3f2f1; }
.status > span:first-child { flex: 1; }
.views { display: flex; } .views button { width: 40px; height: 22px; } .views .on { background: #cfcfcf; }
.pm { width: 18px; font-size: 16px; color: #444; }
.status input { appearance: none; width: 100px; height: 20px; background: linear-gradient(#999, #999) center / 100% 1px no-repeat; }
.status input::-webkit-slider-thumb { appearance: none; width: 5px; height: 11px; background: #555; }
.pc { width: 33px; margin-left: 9px; font-size: 12px; }

.menu { position: absolute; left: 522px; top: 167px; width: 218px; padding: 1px; background: #fff; border: 1px solid #c6c6c6; border-radius: 4px; box-shadow: 2px 3px 6px rgba(0, 0, 0, .25); color: #222; }
.menu button { width: 100%; height: 28px; justify-content: flex-start; } .menu .off { color: #a6a6a6; } .menu .hot { background: #d2d0ce; }
.mi { width: 25px; margin-left: 12px; flex: none; }
.menu hr { height: 1px; margin: 1px 0 1px 32px; border: 0; background: #dcdcdc; }
.mini { position: absolute; left: 522px; top: 447px; display: flex; width: 195px; height: 67px; padding: 6px 3px 0 12px; background: #fff; border: 1px solid #c6c6c6; border-radius: 4px; box-shadow: 2px 3px 6px rgba(0, 0, 0, .25); color: #333; }
.mini button { flex-direction: column; justify-content: flex-start; align-items: flex-start; width: 42px; }
.mt { display: flex; align-items: center; gap: 2px; }
.big { display: flex; justify-content: center; align-items: flex-end; width: 24px; height: 24px; padding-bottom: 1px; border-bottom: 6px solid #4472c4; }
.two, .one { width: 24px; display: flex; justify-content: center; text-align: center; line-height: 15px; } .one { padding-top: 6px; }
.mini > .sel { flex: 1; height: 24px; margin: 14px 0 0 -9px; }
.marks { position: absolute; inset: 0; left: -1px; width: 100%; height: 100%; pointer-events: none; overflow: visible; }
</style>
